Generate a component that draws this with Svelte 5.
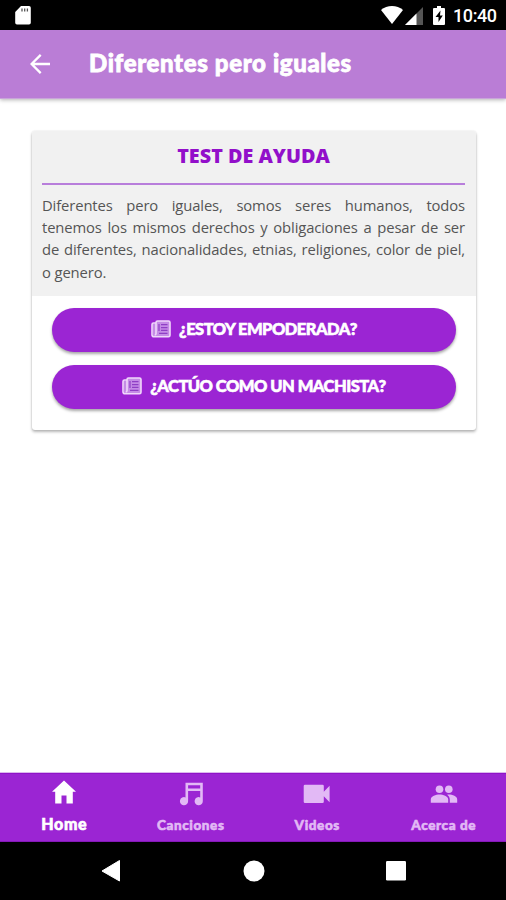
<script lang="ts">
    const buttons = ['¿ESTOY EMPODERADA?', '¿ACTÚO COMO UN MACHISTA?']
    const tabs = ['Home', 'Canciones', 'Videos', 'Acerca de']

    let active = $state('Home')
</script>

<div class="screen">
    <div class="status">
        <svg class="sd" viewBox="0 0 16 19" width="16" height="19">
            <path fill="#fff" d="M6 0h8a1.800 1.800 0 0 1 1.800 1.800v15A1.800 1.800 0 0 1 14 18.600H2A1.800 1.800 0 0 1 .2 16.800V6z" />
            <path stroke="#555" stroke-width="1.300" d="M7 2.500v3M9.700 2.500v3M12.400 2.500v3" />
        </svg>
        <div class="status-right">
            <svg class="wifi" viewBox="0 0 22 18" width="22" height="18">
                <path fill="#fff" d="M0 4C6-1.300 16-1.300 22 4L11 18z" />
            </svg>
            <svg class="signal" viewBox="0 0 18 18" width="18" height="18">
                <path fill="#555" d="M18 0v18H0z" />
                <path fill="#fff" d="M11.500 6.500V18H0z" />
            </svg>
            <svg class="battery" viewBox="0 0 12 19" width="12" height="19">
                <path fill="#fff" d="M4 0h4v2h3q1 0 1 1v15q0 1-1 1H1q-1 0-1-1V3q0-1 1-1h3z" />
                <path fill="#000" d="M7.500 4.500 2.500 11h3v5L9.800 9.500H7z" />
            </svg>
            <span class="clock">10:40</span>
        </div>
    </div>

    <header>
        <svg class="back" viewBox="0 0 20 20" width="20" height="20">
            <path fill="none" stroke="#fff" stroke-width="2.300" d="M20 10H2M10.700.9 1.600 10l9.100 9.100" />
        </svg>
        <h1>Diferentes pero iguales</h1>
    </header>

    <main>
        <section class="card">
            <div class="card-top">
                <h2>TEST DE AYUDA</h2>
                <p>Diferentes pero iguales, somos seres humanos, todos tenemos los mismos derechos y obligaciones a pesar de ser de diferentes, nacionalidades, etnias, religiones, color de piel, o&nbsp;genero.</p>
            </div>
            <div class="actions">
                {#each buttons as label}
                    <button>
                        <svg viewBox="0 0 20 18" width="20" height="18">
                            <path fill="#c58be6" d="M5 1h14v15.500H5zM1 3.500h4v13H2z" />
                            <g fill="none" stroke="#f0d8fb" stroke-width="1.600">
                                <path d="M6.500 1h11q1.500 0 1.500 1.500v12.700q0 1.500-1.500 1.500H3q-2 0-2-2V4.500q0-1.500 1.500-1.500H5v10.500q0 1.500-1.300 1.500M5 3V2.500Q5 1 6.500 1" />
                            </g>
                            <path fill="none" stroke="#8f3fc5" stroke-width="1.200" d="M10 4.700h6.500M10 7.600h6.500M10 10.400h6.500M8 13.300h8.500M8 4v7" />
                        </svg>
                        <span>{label}</span>
                    </button>
                {/each}
            </div>
        </section>
    </main>

    <nav class="tabs">
        {#each tabs as tab, i}
            <button class="tab" class:active={active === tab} onclick={() => (active = tab)}>
                <svg viewBox="0 0 28 28" width="28" height="28" fill="currentColor">
                    {#if i === 0}
                        <path d="M14 2.500 2 13.800h3.200V25.500h6.300v-8h5v8h6.300V13.800H26z" />
                    {:else if i === 1}
                        <path d="M8.500 2.800h17.300v18.400a4.100 4.100 0 1 1-2.600-3.800V11H11.100v10.200A4.100 4.100 0 1 1 8.500 17.400zM11.100 5.200v3.400h12.100V5.200z" fill-rule="evenodd" />
                    {:else if i === 2}
                        <path d="M2 4.800h17.500q1.300 0 1.300 1.300v5.600l5.800-6v16.500l-5.800-6v5.600q0 1.300-1.300 1.300H2q-1.300 0-1.300-1.300V6.100Q.7 4.800 2 4.800z" />
                    {:else}
                        <circle cx="9.500" cy="9.200" r="3.800" />
                        <circle cx="18.800" cy="9.200" r="3.800" />
                        <path d="M.8 22.800v-3.300c0-3.500 5.200-5 8.700-5s8.700 1.500 8.700 5v3.300zM19.800 22.800v-3.300c0-2-1-3.600-2.600-4.800 4-.5 10 1.200 10 4.800v3.300z" />
                    {/if}
                </svg>
                <span>{tab}</span>
            </button>
        {/each}
    </nav>

    <div class="system">
        <svg viewBox="0 0 20 22" width="20" height="22"><path fill="#fff" d="M18.500.5v20.500L1 11z" stroke="#fff" stroke-linejoin="round" /></svg>
        <svg viewBox="0 0 22 22" width="22" height="22"><circle cx="11" cy="11" r="10.500" fill="#fff" /></svg>
        <svg viewBox="0 0 20 20" width="20" height="20"><rect width="20" height="19.500" rx="1.200" fill="#fff" /></svg>
    </div>
</div>

<style>
    :global(body) {
        margin: 0;
        background: #fff;
    }

    .screen {
        width: 506px;
        height: 900px;
        display: flex;
        flex-direction: column;
        overflow: hidden;
        background: #fff;
        font-family: "Lato", "Open Sans", sans-serif;
    }

    .status {
        height: 30px;
        flex: none;
        box-sizing: border-box;
        padding: 0 9px 0 15px;
        background: #000;
        display: flex;
        justify-content: space-between;
        align-items: center;
    }

    .status-right {
        display: flex;
        align-items: center;
    }

    .wifi {
        margin-right: 1px;
    }

    .signal {
        margin: 1px 10px 0 1px;
    }

    .clock {
        margin-left: 8px;
        width: 44px;
        color: #fff;
        font: 500 18px/30px Roboto, sans-serif;
        letter-spacing: -0.4px;
        padding-top: 2px;
    }

    header {
        height: 68px;
        flex: none;
        display: flex;
        align-items: center;
        padding-left: 30px;
        background: #ba7dd6;
        border-bottom: 1px solid #c9a5da;
        box-shadow: 0 1px 4px rgba(0, 0, 0, 0.3);
    }

    h1 {
        margin: 0 0 3px 39px;
        color: #fff;
        font-size: 24px;
        line-height: 30px;
        font-weight: 900;
        letter-spacing: 0.64px;
        -webkit-text-stroke: 0.8px #fff;
        white-space: nowrap;
    }

    main {
        flex: 1;
        padding: 32px 30px 0 32px;
    }

    .card {
        height: 299px;
        background: #fff;
        border-radius: 3px;
        overflow: hidden;
        box-shadow: 0 2px 3px rgba(0, 0, 0, 0.28), 0 0 2px rgba(0, 0, 0, 0.12);
    }

    .card-top {
        height: 165px;
        box-sizing: border-box;
        padding: 10px 11px 0 10px;
        background: #f1f1f1;
    }

    h2 {
        margin: 0;
        height: 42px;
        border-bottom: 2px solid #b87edb;
        color: #920fca;
        font: 800 19.8px/30px "Open Sans", sans-serif;
        text-align: center;
    }

    p {
        margin: 9px 0 0;
        color: #555;
        font: 400 14.8px/22.2px "Open Sans", sans-serif;
        letter-spacing: -0.12px;
        text-align: justify;
    }

    .actions {
        display: flex;
        flex-direction: column;
        gap: 13px;
        padding: 12px 20px;
    }

    button {
        border: 0;
        padding: 0;
        font-family: inherit;
    }

    .actions button {
        height: 44px;
        border-radius: 22px;
        background: #9b25d3;
        color: #fff;
        display: flex;
        align-items: center;
        justify-content: center;
        gap: 8px;
        font-size: 16.5px;
        font-weight: 900;
        letter-spacing: -0.52px;
        -webkit-text-stroke: 0.6px #fff;
        white-space: nowrap;
        box-shadow: 0 2px 3px rgba(0, 0, 0, 0.35);
    }

    .actions svg {
        margin-top: -3px;
    }

    .actions span {
        margin-top: -3px;
    }

    .tabs {
        height: 69px;
        flex: none;
        display: flex;
        background: #9b25d3;
        box-shadow: inset 0 1px #9013c8, inset 0 -1px #8518b8, 0 -1px #dcb8ee;
    }

    .tab {
        flex: 1;
        background: none;
        color: #e2b9f5;
        display: flex;
        flex-direction: column;
        align-items: center;
        padding: 7px 0 0 2px;
        font-size: 13.5px;
        font-weight: 900;
        letter-spacing: 0.6px;
        -webkit-text-stroke: 0.6px currentColor;
    }

    .tab span {
        line-height: 18px;
        margin-top: 8px;
    }

    .tab.active {
        color: #fff;
        font-size: 16px;
        padding-top: 5px;
    }

    .tab.active span {
        margin-top: 9px;
    }

    .system {
        height: 58px;
        flex: none;
        box-sizing: border-box;
        background: #000;
        display: flex;
        align-items: center;
        justify-content: space-between;
        padding: 0 100px 0 101px;
    }
</style>
